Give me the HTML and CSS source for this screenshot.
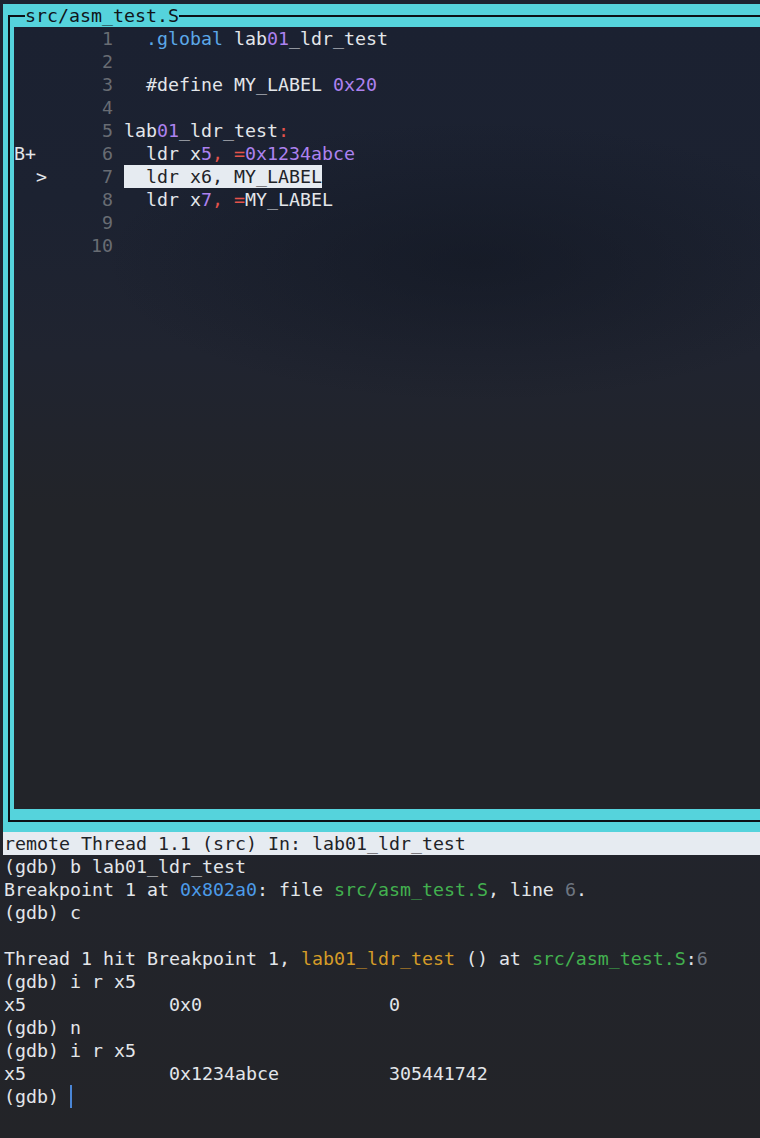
FILE: index.html
```html
<!DOCTYPE html>
<html lang="en">
    <head>
        <meta charset="UTF-8">
        <meta name="viewport" content="width=device-width, initial-scale=1.0">
        <title>gdb - src/asm_test.S</title>
        <link rel="stylesheet" href="styles.css">
    </head>
    <body>
        <div class="frame">
            <span class="title">src/asm_test.S</span>
            <div class="box">
                <div class="code">
                    <div class="ln"><span class="mark"></span><span class="num">1</span><span class="src">  <span class="kw">.global</span> lab<span class="pu">01</span>_ldr_test</span></div>
                    <div class="ln"><span class="mark"></span><span class="num">2</span><span class="src"></span></div>
                    <div class="ln"><span class="mark"></span><span class="num">3</span><span class="src">  #define MY_LABEL <span class="pu">0x20</span></span></div>
                    <div class="ln"><span class="mark"></span><span class="num">4</span><span class="src"></span></div>
                    <div class="ln"><span class="mark"></span><span class="num">5</span><span class="src">lab<span class="pu">01</span>_ldr_test<span class="rd">:</span></span></div>
                    <div class="ln"><span class="mark">B+</span><span class="num">6</span><span class="src">  ldr x<span class="pu">5</span><span class="rd">,</span> <span class="rd">=</span><span class="pu">0x1234abce</span></span></div>
                    <div class="ln"><span class="mark">  &gt;</span><span class="num">7</span><span class="src cur">  ldr x6, MY_LABEL</span></div>
                    <div class="ln"><span class="mark"></span><span class="num">8</span><span class="src">  ldr x<span class="pu">7</span><span class="rd">,</span> <span class="rd">=</span>MY_LABEL</span></div>
                    <div class="ln"><span class="mark"></span><span class="num">9</span><span class="src"></span></div>
                    <div class="ln"><span class="mark"></span><span class="num">10</span><span class="src"></span></div>
                </div>
            </div>
        </div>

        <div class="status">remote Thread 1.1 (src) In: lab01_ldr_test</div>

        <div class="console">
            <div class="row">(gdb) b lab01_ldr_test</div>
            <div class="row">Breakpoint 1 at <span class="addr">0x802a0</span>: file <span class="file">src/asm_test.S</span>, line <span class="dim">6</span>.</div>
            <div class="row">(gdb) c</div>
            <div class="row"></div>
            <div class="row">Thread 1 hit Breakpoint 1, <span class="fn">lab01_ldr_test</span> () at <span class="file">src/asm_test.S</span>:<span class="dim">6</span></div>
            <div class="row">(gdb) i r x5</div>
            <div class="row">x5             0x0                 0</div>
            <div class="row">(gdb) n</div>
            <div class="row">(gdb) i r x5</div>
            <div class="row">x5             0x1234abce          305441742</div>
            <div class="row">(gdb) <span class="caret"></span></div>
        </div>
    </body>
</html>
```

FILE: styles.css
```css
*{
    margin: 0;
    padding: 0;
    box-sizing: border-box;
}

body{
    height: 100vh;
    overflow: hidden;
    padding: 4px 0 0 3px;
    background: linear-gradient(180deg, #1d2331 0%, #202430 40%, #232428 100%);
    color: #e3e6ea;
    font-family: "DejaVu Sans Mono", "Liberation Mono", monospace;
    font-size: 18.27px;
    line-height: 23px;
}

/* source window */
.frame{
    position: relative;
    background: #55d3dc;
    padding: 11px 0 10px 5px;
}

.title{
    position: absolute;
    top: 0;
    left: 22px;
    height: 23px;
    background: #55d3dc;
    color: #10141a;
    white-space: pre;
}

.box{
    border: 2px solid #0c1016;
    border-right: none;
    padding: 10px 0 11px 4px;
}

.code{
    height: 782px;
    background:
        radial-gradient(ellipse 50% 18% at 62% 30%, rgba(16, 21, 32, 0.55), transparent),
        linear-gradient(180deg, #1b2131 0%, #1c2231 22%, #202430 42%, #222429 62%, #222429 100%);
}

.ln{
    display: flex;
    height: 23px;
    white-space: pre;
}

.mark{
    width: 66px;
    color: #e3e6ea;
}

.num{
    width: 33px;
    text-align: right;
    color: #686c73;
}

.src{
    margin-left: 11px;
}

.src.cur{
    background: #e6ebf1;
    color: #1f2328;
}

.kw{color: #5ba8e8;}
.pu{color: #ad82ef;}
.rd{color: #e5534b;}

/* gdb command window */
.status{
    height: 23px;
    background: #e6ebf1;
    color: #1f2328;
    padding-left: 1px;
    white-space: pre;
}

.console{
    padding-left: 1px;
}

.row{
    height: 23px;
    white-space: pre;
}

.addr{color: #4c9be8;}
.file{color: #42b14f;}
.fn{color: #d59c28;}
.dim{color: #6e7681;}

.caret{
    display: inline-block;
    width: 2px;
    height: 23px;
    vertical-align: top;
    background: #4a86d6;
}
```
